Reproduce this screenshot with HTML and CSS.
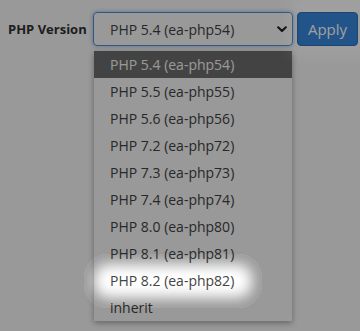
FILE: index.html
```html
<!DOCTYPE html>
<html>
<head>
<meta charset="utf-8">
<link rel="stylesheet" href="styles.css">
</head>
<body>
<div class="page">
  <div class="row">
    <label class="label">PHP Version</label>
    <div class="select">
      <span class="select-text">PHP 5.4 (ea-php54)</span>
      <svg class="chevron" width="10" height="7" viewBox="0 0 10 7"><path d="M1.2 1.3 L5 5 L8.8 1.3" fill="none" stroke="#222" stroke-width="2.2" stroke-linecap="round" stroke-linejoin="round"/></svg>
    </div>
    <button class="apply">Apply</button>
  </div>
  <ul class="menu">
    <li class="item active">PHP 5.4 (ea-php54)</li>
    <li class="item">PHP 5.5 (ea-php55)</li>
    <li class="item">PHP 5.6 (ea-php56)</li>
    <li class="item">PHP 7.2 (ea-php72)</li>
    <li class="item">PHP 7.3 (ea-php73)</li>
    <li class="item">PHP 7.4 (ea-php74)</li>
    <li class="item">PHP 8.0 (ea-php80)</li>
    <li class="item">PHP 8.1 (ea-php81)</li>
    <li class="item">PHP 8.2 (ea-php82)</li>
    <li class="item">inherit</li>
  </ul>
  <div class="spotlight"></div>
  <div class="glow"></div>
</div>
</body>
</html>
```

FILE: styles.css
```css
html, body {
  margin: 0;
  padding: 0;
  background: #fff;
}
body {
  width: 360px;
  height: 331px;
  overflow: hidden;
  font-family: "Open Sans", "Noto Sans", sans-serif;
  color: #444;
}
.page {
  position: relative;
  width: 360px;
  height: 331px;
  overflow: hidden;
}
.row {
  display: flex;
  align-items: center;
  padding: 12px 0 0 8px;
}
.label {
  font-size: 13px;
  font-weight: 700;
  color: #333;
  width: 85px;
}
.select {
  box-sizing: border-box;
  width: 200px;
  height: 34px;
  border: 1px solid #4d92db;
  border-radius: 4px;
  box-shadow: 0 0 4px rgba(60,130,210,0.55);
  display: flex;
  align-items: center;
  justify-content: space-between;
  padding: 0 5px 0 16px;
}
.select-text {
  font-size: 14px;
  color: #444;
}
.chevron {
  display: block;
}
.apply {
  box-sizing: border-box;
  margin-left: 4px;
  width: 61px;
  height: 34px;
  border: 1px solid #1a5fae;
  border-radius: 4px;
  background: #1f78d6;
  color: #fff;
  font-family: "Open Sans", "Noto Sans", sans-serif;
  font-size: 15px;
  padding: 0;
}
.menu {
  position: absolute;
  left: 94px;
  top: 51px;
  width: 198px;
  margin: 0;
  padding: 0;
  list-style: none;
  background: #fff;
  box-shadow: 0 2px 6px rgba(0,0,0,0.35);
}
.item {
  height: 27px;
  line-height: 27px;
  padding-left: 16px;
  font-size: 14px;
  color: #444;
}
.item.active {
  background: #717171;
  color: #fff;
}
.spotlight {
  position: absolute;
  left: 84px;
  top: 254px;
  width: 178px;
  height: 54px;
  border-radius: 24px;
  box-shadow: 0 0 0 2000px rgba(0,0,0,0.4), inset 0 0 14px 10px rgba(0,0,0,0.4);
}
.glow {
  position: absolute;
  left: 290px;
  top: -6px;
  width: 80px;
  height: 62px;
  background: rgba(255,255,255,0.07);
  filter: blur(8px);
}
```
